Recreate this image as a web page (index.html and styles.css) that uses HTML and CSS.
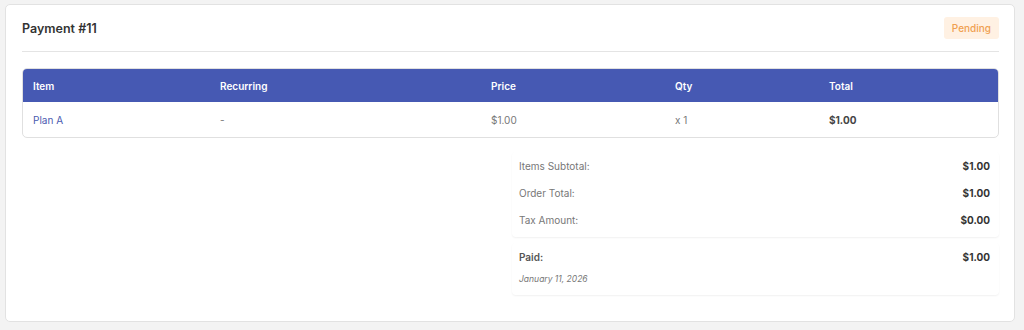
FILE: index.html
```html
<!DOCTYPE html>
<html lang="en">
<head>
  <meta charset="UTF-8">
  <meta name="viewport" content="width=device-width, initial-scale=1.0">
  <title>Payment #11</title>
  <link rel="stylesheet" href="styles.css">
</head>
<body>
  <div class="card">
    <div class="card-header">
      <h2>Payment #11</h2>
      <span class="badge pending">Pending</span>
    </div>

    <table class="items">
      <thead>
        <tr>
          <th class="col-item">Item</th>
          <th class="col-recurring">Recurring</th>
          <th class="col-price">Price</th>
          <th class="col-qty">Qty</th>
          <th>Total</th>
        </tr>
      </thead>
      <tbody>
        <tr>
          <td class="item-name">Plan A</td>
          <td>-</td>
          <td>$1.00</td>
          <td>x 1</td>
          <td class="strong">$1.00</td>
        </tr>
      </tbody>
    </table>

    <div class="summary">
      <div class="summary-box">
        <div class="summary-row"><span>Items Subtotal:</span><b>$1.00</b></div>
        <div class="summary-row"><span>Order Total:</span><b>$1.00</b></div>
        <div class="summary-row"><span>Tax Amount:</span><b>$0.00</b></div>
      </div>
      <div class="summary-box">
        <div class="summary-row paid"><span>Paid:</span><b>$1.00</b></div>
        <div class="paid-date">January 11, 2026</div>
      </div>
    </div>
  </div>
</body>
</html>
```

FILE: styles.css
```css
body {
  font-family: Inter, "Noto Sans", sans-serif;
  background: #f3f3f3;
  margin: 0;
  padding: 4px 9px 0 5px;
  color: #555;
}

.card {
  background: #ffffff;
  border: 1px solid #e2e2e2;
  border-radius: 5px;
  padding: 0 15px 26px 16px;
}

.card-header {
  display: flex;
  justify-content: space-between;
  align-items: center;
  height: 46px;
  border-bottom: 1px solid #e4e4e4;
  margin-bottom: 16px;
}

.card-header h2 {
  margin: 0;
  font-size: 12.5px;
  font-weight: 600;
  color: #333;
}

.badge {
  font-size: 10px;
  font-weight: 500;
  padding: 5px 8px;
  border-radius: 3px;
}

.badge.pending {
  background: #fff1e3;
  color: #f0a050;
}

.items {
  width: 100%;
  border-collapse: separate;
  border-spacing: 0;
  border: 1px solid #e0e0e0;
  border-radius: 5px;
  overflow: hidden;
  font-size: 10px;
}

.items th {
  background: #4659b3;
  color: #ffffff;
  font-weight: 600;
  text-align: left;
  height: 33px;
  padding: 0 10px;
}

.items td {
  height: 35px;
  padding: 0 10px;
  color: #777;
}

.items .col-item { width: 167px; }
.items .col-recurring { width: 251px; }
.items .col-price { width: 164px; }
.items .col-qty { width: 134px; }

.items .item-name {
  color: #4a5bb0;
}

.items .strong {
  color: #444;
  font-weight: 700;
}

.summary {
  margin: 14px 0 0 auto;
  width: 487px;
  display: flex;
  flex-direction: column;
  gap: 6px;
}

.summary-box {
  padding: 0 9px 4px 7px;
  border-radius: 4px;
  box-shadow: 0 1px 2px rgba(0, 0, 0, 0.06);
  font-size: 10px;
}

.summary-row {
  display: flex;
  justify-content: space-between;
  align-items: center;
  height: 27px;
  color: #777;
}

.summary-row b {
  color: #333;
  font-weight: 700;
}

.summary-row.paid span {
  color: #555;
  font-weight: 600;
}

.paid-date {
  font-size: 8.5px;
  font-style: italic;
  color: #777;
  padding: 4px 0 7px;
}
```
